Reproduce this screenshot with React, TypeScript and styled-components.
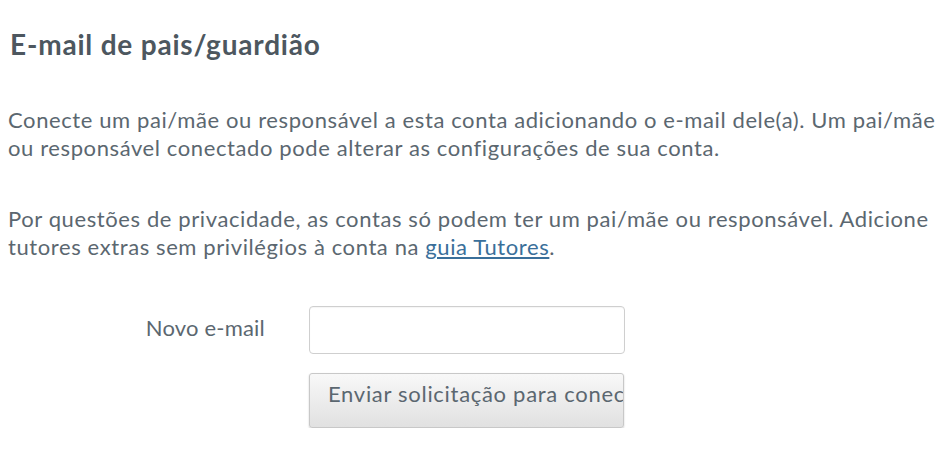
import React from "react";
import styled, { createGlobalStyle } from "styled-components";

const Global = createGlobalStyle`
  html, body { margin: 0; padding: 0; background: #fff; }
  body { font-family: Lato, "Noto Sans", sans-serif; }
`;

const Page = styled.div`
  padding: 27px 8px 0 8px;
  width: 948px;
  box-sizing: border-box;
`;

const Title = styled.h2`
  margin: 0 0 45px 0;
  font-size: 28px;
  line-height: 34px;
  letter-spacing: 0.8px;
  font-weight: 700;
  color: #4d575f;
  padding-left: 2px;
`;

const Para = styled.p`
  margin: 0 0 43px 0;
  font-size: 22px;
  line-height: 28px;
  letter-spacing: 0.6px;
  color: #5b6770;
`;

const Link = styled.a`
  color: #3a6f9a;
  text-decoration: underline;
`;

const Form = styled.div`
  display: grid;
  grid-template-columns: 257px 316px;
  column-gap: 44px;
  row-gap: 19px;
  align-items: center;
  margin-top: 45px;
`;

const Label = styled.label`
  text-align: right;
  font-size: 22px;
  letter-spacing: 0.2px;
  color: #5b6770;
  padding-bottom: 5px;
`;

const Input = styled.input`
  box-sizing: border-box;
  width: 316px;
  height: 48px;
  margin: 0;
  border: 1px solid #cfcfcf;
  border-radius: 4px;
  background: #fff;
  box-shadow: inset 0 1px 1px rgba(0,0,0,0.04);
  font-family: inherit;
  font-size: 20px;
  padding: 0 10px;
  outline: none;
`;

const Button = styled.button`
  grid-column: 2;
  box-sizing: border-box;
  width: 315px;
  height: 55px;
  margin: 0;
  border: 1px solid #c8c8c8;
  border-radius: 3px;
  background: linear-gradient(#f8f8f8, #e1e1e1);
  box-shadow: 0 1px 2px rgba(0,0,0,0.2);
  font-family: Lato, "Noto Sans", sans-serif;
  font-size: 22px;
  letter-spacing: 0.7px;
  color: #5b6770;
  padding: 0 0 14px 18px;
  text-align: left;
  white-space: nowrap;
  overflow: hidden;
  cursor: pointer;
`;

export default function App() {
  return (
    <>
      <Global />
      <Page>
        <Title>E-mail de pais/guardião</Title>
        <Para>
          Conecte um pai/mãe ou responsável a esta conta adicionando o e-mail dele(a). Um pai/mãe ou
          responsável conectado pode alterar as configurações de sua conta.
        </Para>
        <Para>
          Por questões de privacidade, as contas só podem ter um pai/mãe ou responsável. Adicione
          tutores extras sem privilégios à conta na <Link href="#">guia Tutores</Link>.
        </Para>
        <Form>
          <Label htmlFor="email">Novo e-mail</Label>
          <Input id="email" type="email" />
          <Button>Enviar solicitação para conectar</Button>
        </Form>
      </Page>
    </>
  );
}
